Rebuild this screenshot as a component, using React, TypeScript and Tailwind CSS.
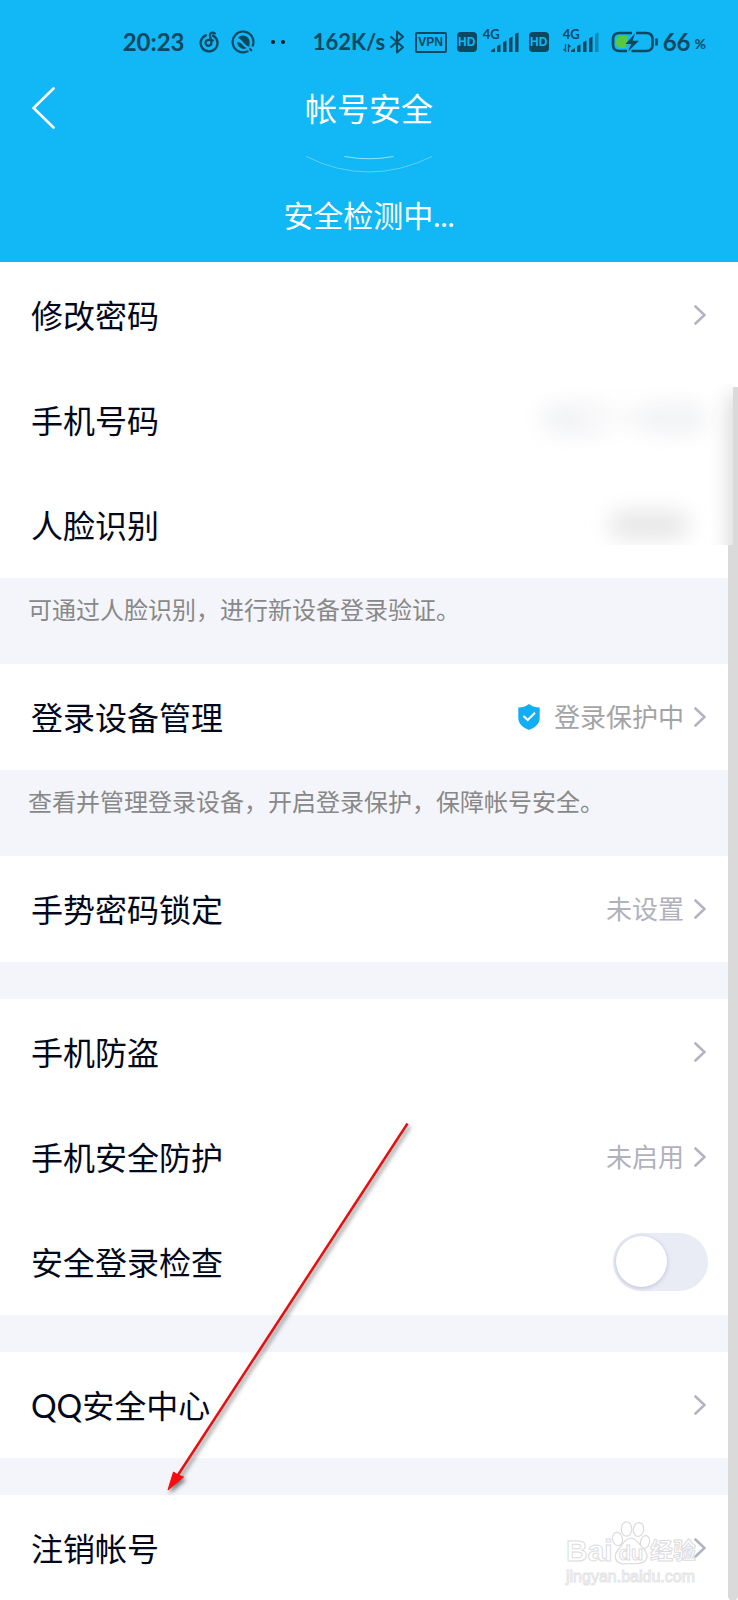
import type { ReactNode } from "react";

function NetEaseIcon() {
  return (
    <svg className="h-[22px] w-5" viewBox="0 0 20 22" fill="none" stroke="currentColor" strokeWidth="2.4" strokeLinecap="round">
      <path d="M6.800 4.300A8.400 8.400 0 1 0 14 4.600" />
      <path d="M15.800 2.300C13.500.8 10.600 1.800 11 4.500l1.300 6.800a2.900 2.900 0 1 1-3.600-2.200c1.500-.5 3.600-.6 5 .4" strokeWidth="2.200" />
    </svg>
  );
}

function SwirlIcon() {
  return (
    <svg className="h-6 w-6" viewBox="0 0 24 24" fill="none" stroke="currentColor" strokeLinecap="round">
      <path d="M16.500 21.300A10.400 10.400 0 1 1 21.800 15.500" strokeWidth="2.200" />
      <path d="M7 7.800a6.600 6.600 0 0 1 11.600 4.500l-.2 4.400c-2.900-.6-4.600-2-6.400-4.600C10.500 9.900 8.500 8.700 7 7.800Z" fill="currentColor" stroke="none" />
      <path d="M6 12.500c3-1 4.200.7 5.700 2.600 1.400 1.700 2.500 2.400 4.300 3-3.500 2-8.500.4-10-5.600Z" fill="currentColor" stroke="none" />
      <path d="M18.800 18.800l1.400 1.400" strokeWidth="2" />
    </svg>
  );
}

function BluetoothIcon() {
  return (
    <svg className="h-6 w-4" viewBox="0 0 16 24" fill="none" stroke="currentColor" strokeWidth="2">
      <path d="M1.500 6.500 14 17.200 8 22.500V1.500l6 5.300L1.500 17.500" strokeLinejoin="round" />
    </svg>
  );
}

function SignalBars({ dim }: { dim?: boolean }) {
  return (
    <svg className="h-5 w-7" viewBox="0 0 28 20" fill="currentColor">
      <path d="M0 20v-1.500l4-2.500V20Z" />
      <path d="M6 20v-6l3.500-1.500V20Z" />
      <path d="M12 20V10.500l3.500-2V20Z" />
      <path d="M18 20V6.500l3.500-2V20Z" />
      <path d="M24 20V2L27.500.5V20Z" opacity={dim ? 0.4 : 1} />
    </svg>
  );
}

function CellSignal({ dim }: { dim?: boolean }) {
  return (
    <span className="relative flex h-5 w-9 items-end justify-end">
      <span className="absolute -top-1 left-0 text-[13px] leading-3 font-bold">4G</span>
      {dim && (
        <svg className="absolute bottom-0 left-0 h-2 w-2" viewBox="0 0 8 8" fill="none" stroke="currentColor" strokeWidth="1.300">
          <path d="M2.500 0v7L.5 5M5.500 8V1l2 2" />
        </svg>
      )}
      <SignalBars dim={dim} />
    </span>
  );
}

function HdBadge() {
  return (
    <span className="flex h-5 w-5 items-center justify-center rounded-sm bg-[#0d4862] font-['Liberation_Sans',sans-serif] text-xs leading-none font-bold text-[#12b7f5]">
      HD
    </span>
  );
}

function BatteryIcon() {
  return (
    <svg className="h-6 w-12" viewBox="0 0 48 24">
      <path d="M17 6H10Q5 6 5 11v2q0 5 5 5h5Z" fill="#5ac83c" />
      <path d="M21 3H8.500Q2 3 2 9v6q0 6 6.500 6H16M25 3h10q6.500 0 6.500 6v6q0 6-6.500 6H20.500" fill="none" stroke="currentColor" strokeWidth="2.600" />
      <path d="M24 3.500 14.500 14h5.800L17 21.500 28 10.800h-6.300Z" fill="currentColor" />
      <path d="M45.500 8.500v7" stroke="currentColor" strokeWidth="2.600" />
    </svg>
  );
}

function StatusBar() {
  return (
    <div className="flex h-[84px] items-center justify-end pr-8 font-[Lato,sans-serif] text-2xl leading-6 font-bold text-[#0d4862]">
      <span className="w-[76px]">20:23</span>
      <NetEaseIcon />
      <span className="ml-3 flex"><SwirlIcon /></span>
      <span className="ml-4 flex gap-1.5">
        <i className="h-1 w-1 rounded-full bg-[#071c26]" />
        <i className="h-1 w-1 rounded-full bg-[#071c26]" />
      </span>
      <span className="ml-7 w-[76px] text-[22px]">162K/s</span>
      <BluetoothIcon />
      <span className="ml-2.5 flex h-[21px] w-8 items-center justify-center rounded-xs border-2 border-current font-['Liberation_Sans',sans-serif] text-xs leading-none">VPN</span>
      <span className="ml-2.5"><HdBadge /></span>
      <span className="ml-1.5"><CellSignal /></span>
      <span className="ml-2.5"><HdBadge /></span>
      <span className="ml-3.5"><CellSignal dim /></span>
      <span className="ml-3"><BatteryIcon /></span>
      <span className="ml-1">66</span>
      <span className="ml-1 pt-1 text-sm">%</span>
    </div>
  );
}

function Chevron() {
  return (
    <svg className="h-5 w-3 shrink-0" viewBox="0 0 12 20" fill="none" stroke="#b3b4bf" strokeWidth="2.600" strokeLinecap="round">
      <path d="M1.500 1.500 10.500 10l-9 8.500" />
    </svg>
  );
}

function ShieldIcon() {
  return (
    <svg className="mr-3.5 h-[26px] w-[22px]" viewBox="0 0 22 26" fill="none">
      <path d="M11 0c3 2.500 6.500 3.500 10.700 3.600V14c0 6-4.700 9.500-10.700 12C5 23.500.3 20 .3 14V3.600C4.500 3.500 8 2.500 11 0Z" fill="#12aef5" />
      <path d="m5.500 12 4.200 4 7.300-7.200" stroke="#fff" strokeWidth="2" />
    </svg>
  );
}

function LinkRow({ label, value, valueClass = "text-[#b0b1bb]", icon }: { label: string; value?: string; valueClass?: string; icon?: ReactNode }) {
  return (
    <li>
      <a href="#" className="flex h-[105px] items-center pr-8 pl-[31px]">
        <span className="flex-1 pt-0.5 text-[32px] leading-10">{label}</span>
        {icon}
        {value && <span className={`mr-2.5 text-[26px] leading-8 ${valueClass}`}>{value}</span>}
        <Chevron />
      </a>
    </li>
  );
}

function MaskedRow({ label }: { label: string }) {
  return (
    <li className="flex h-[105px] items-center pl-[31px]">
      <span className="pt-0.5 text-[32px] leading-10">{label}</span>
    </li>
  );
}

function Note({ children }: { children: ReactNode }) {
  return <p className="h-[86px] px-7 pt-4 text-2xl leading-8 text-[#888888]">{children}</p>;
}

function Group({ children }: { children: ReactNode }) {
  return <ul className="bg-white pb-px">{children}</ul>;
}

function MaskedValues() {
  return (
    <div className="absolute top-[121px] right-[5px] h-[162px] w-[220px] overflow-hidden bg-white">
      <div className="absolute top-6 left-7 h-6 w-16 rounded-full bg-[#eeeff3] blur-[12px]" />
      <div className="absolute top-6 left-16 h-5 w-32 rounded-full bg-[#f9f9fa] blur-[10px]" />
      <div className="absolute top-6 left-32 h-6 w-16 rounded-full bg-[#f0f1f4] blur-[12px]" />
      <div className="absolute top-32 left-24 h-7 w-20 rounded-full bg-[#e6e6e6] blur-[11px]" />
      <div className="absolute top-3 -right-4 h-44 w-5 bg-[#d6d6d6] blur-[10px]" />
    </div>
  );
}

function PointerArrow() {
  return (
    <svg className="pointer-events-none absolute top-[861px] left-[160px] h-[374px] w-[256px] drop-shadow-[2px_3px_2px_rgba(0,0,0,0.5)]" viewBox="0 0 256 374">
      <path d="M247.500 0.500 16 355" stroke="#e60f0f" strokeWidth="2.500" />
      <path d="m8 367 5.500-18 4.500 3 5.500 2Z" fill="#fa0c0c" stroke="#e60f0f" />
    </svg>
  );
}

function Watermark() {
  return (
    <div className="pointer-events-none absolute right-[40px] bottom-3 w-[132px] text-white [-webkit-text-stroke:1px_#dcdcdf]">
      <div className="flex h-11 items-end font-['Liberation_Sans','Noto_Sans_CJK_SC',sans-serif] leading-7 font-bold">
        <span className="w-[46px] text-[30px]">Bai</span>
        <span className="relative flex h-11 w-[38px] items-end justify-center text-xl leading-6">
          <svg className="absolute inset-0 h-11 w-[38px]" viewBox="0 0 38 44" fill="#fff" stroke="#dcdcdf" strokeWidth="1.200">
            <ellipse cx="5.500" cy="18" rx="4.900" ry="6.700" transform="rotate(-12 5.500 18)" />
            <ellipse cx="14.500" cy="8" rx="5.200" ry="7.200" />
            <ellipse cx="26.500" cy="8.500" rx="5.200" ry="7" transform="rotate(10 26.500 8.500)" />
            <ellipse cx="33" cy="21" rx="4.500" ry="6.500" transform="rotate(12 33 21)" />
            <path d="M19 17c5 0 7.500 5 11 9 4 4 6 7 4.800 11-1.500 5-6.300 6.500-15.800 5.500-9.500 1-13.700 0-15.300-4.500-1.600-4 1-8 4.300-11.500C11 22 14 17 19 17Z" />
          </svg>
          <span className="relative">du</span>
        </span>
        <span className="text-[23px]">经验</span>
      </div>
      <div className="font-['Liberation_Sans',sans-serif] text-base leading-6 [-webkit-text-stroke:1px_#e4e4e6]">jingyan.baidu.com</div>
    </div>
  );
}

export default function App() {
  return (
    <div className="flex min-h-screen flex-col bg-white font-[Lato,'Noto_Sans_CJK_SC',sans-serif] text-[#03081a]">
      <header className="bg-[#12b7f5] text-white">
        <StatusBar />
        <div className="grid h-12 grid-cols-[1fr_auto_1fr] items-center px-8">
          <button type="button" aria-label="返回" className="flex">
            <svg className="h-[42px] w-6" viewBox="0 0 24 42" fill="none" stroke="currentColor" strokeWidth="2.600" strokeLinecap="round">
              <path d="M21.500 1.500 1.500 21l20 19.500" />
            </svg>
          </button>
          <h1 className="pt-0.5 text-[32px] leading-10">帐号安全</h1>
        </div>
        <div className="flex h-[130px] flex-col items-center pt-6">
          <svg className="h-[18px] w-32" viewBox="0 0 128 18" fill="none">
            <path d="M1 .5q63 31 126 0" stroke="#5fd0f6" />
            <path d="M39.500.5q24.500 4.500 49 0" stroke="#8ee6f3" />
          </svg>
          <p className="mt-5 pt-px text-[30px] leading-10">安全检测中...</p>
        </div>
      </header>

      <main className="relative flex-1">
        <Group>
          <LinkRow label="修改密码" />
          <MaskedRow label="手机号码" />
          <MaskedRow label="人脸识别" />
        </Group>
        <div className="bg-[#f4f5fa]">
          <Note>可通过人脸识别，进行新设备登录验证。</Note>
          <Group>
            <LinkRow label="登录设备管理" value="登录保护中" valueClass="text-[#a4a4a4]" icon={<ShieldIcon />} />
          </Group>
          <Note>查看并管理登录设备，开启登录保护，保障帐号安全。</Note>
          <div className="flex flex-col gap-[37px]">
            <Group>
              <LinkRow label="手势密码锁定" value="未设置" />
            </Group>
            <Group>
              <LinkRow label="手机防盗" />
              <LinkRow label="手机安全防护" value="未启用" />
              <li className="flex h-[105px] items-center justify-between pr-[30px] pl-[31px]">
                <label htmlFor="login-check" className="pt-0.5 text-[32px] leading-10">安全登录检查</label>
                <input
                  id="login-check"
                  type="checkbox"
                  className="flex h-[58px] w-[95px] appearance-none items-center rounded-full bg-[#e9ebf5] px-[3px] before:h-[51px] before:w-[51px] before:rounded-full before:bg-white before:shadow-[0_1px_4px_rgba(120,125,160,0.4)] checked:bg-[#12b7f5] checked:before:ml-auto"
                />
              </li>
            </Group>
            <Group>
              <LinkRow label="QQ安全中心" />
            </Group>
            <Group>
              <LinkRow label="注销帐号" />
            </Group>
          </div>
        </div>
        <div className="absolute top-[125px] right-0 bottom-0 w-2.5 rounded-b-md bg-[#dadada]" />
        <MaskedValues />
        <PointerArrow />
        <Watermark />
      </main>
    </div>
  );
}
